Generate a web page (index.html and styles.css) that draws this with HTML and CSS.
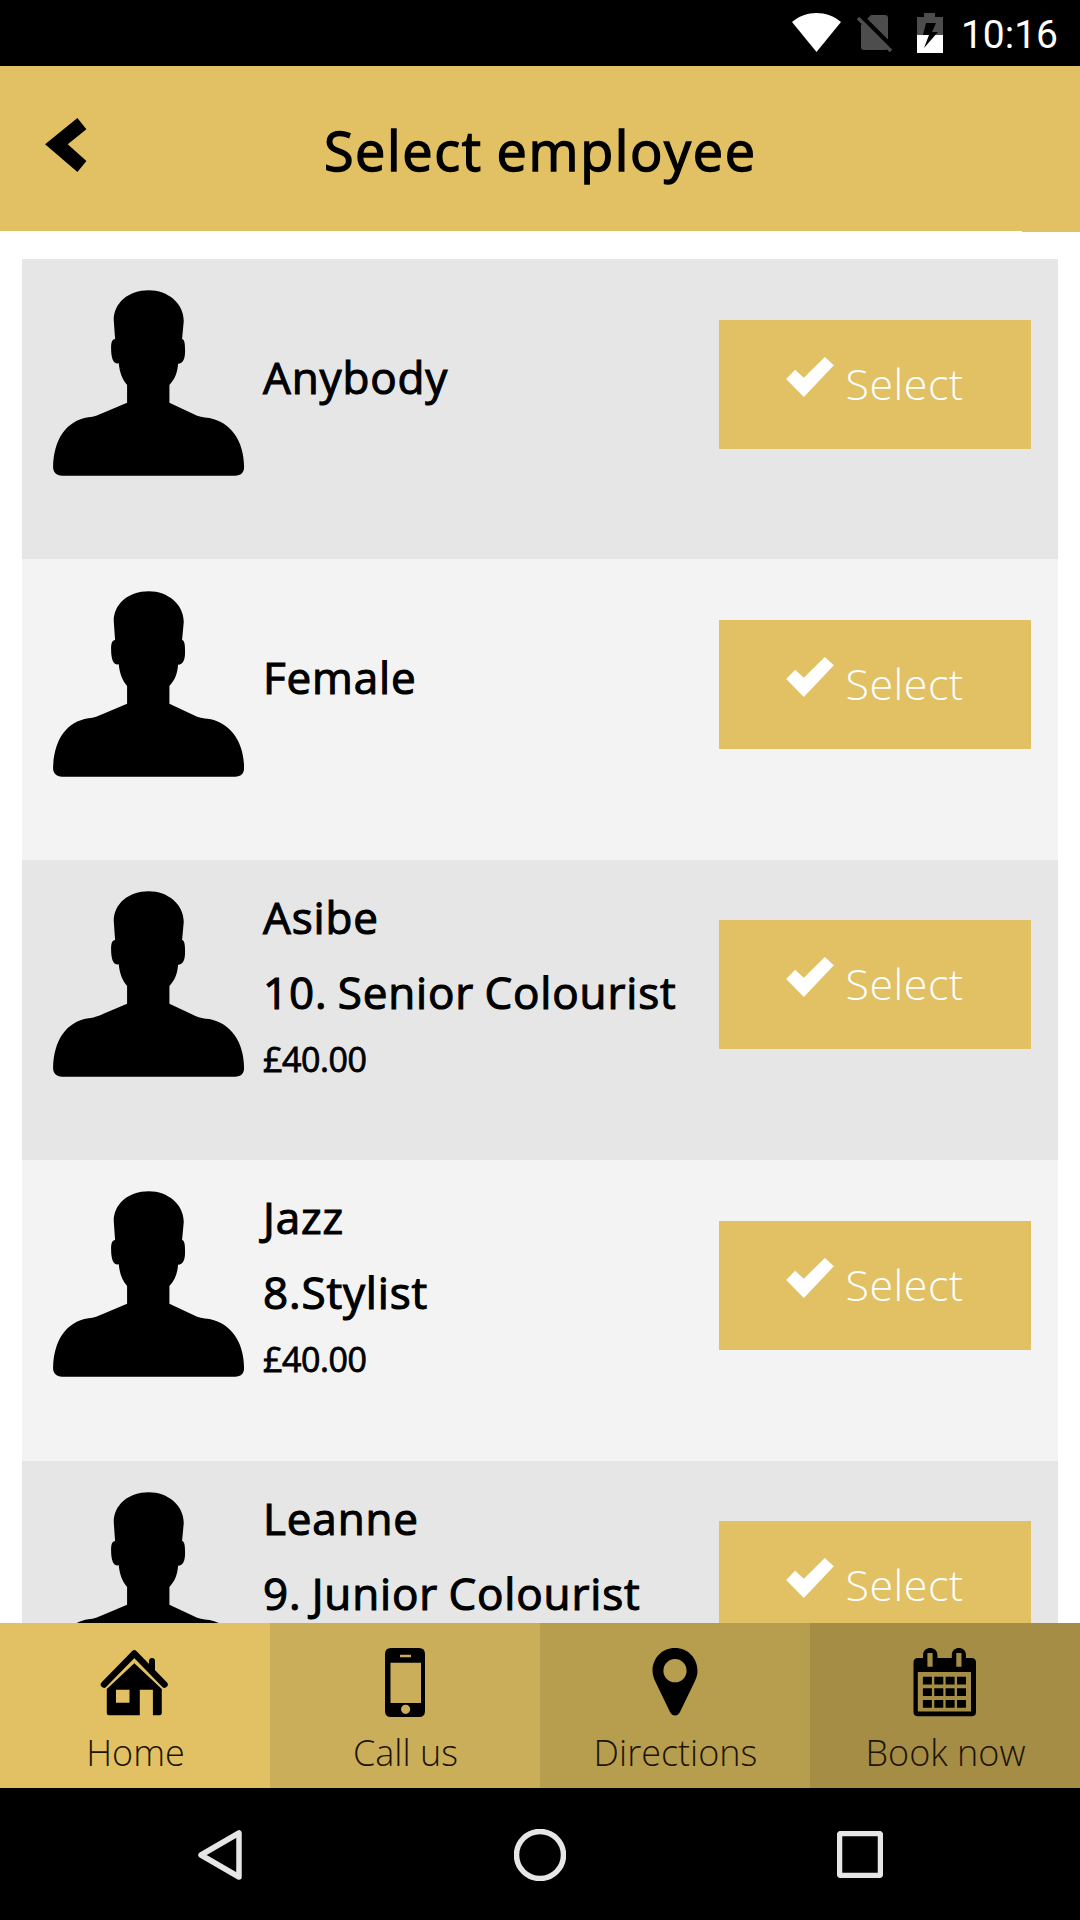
FILE: index.html
```html
<!DOCTYPE html>
<html lang="en">
  <head>
    <meta charset="UTF-8" />
    <meta
      name="viewport"
      content="width=device-width, initial-scale=1.0"
    />
    <title>Select employee</title>
    <link rel="stylesheet" href="styles.css">
  </head>
  <body>
    <!-- shared icons -->
    <svg class="icon-defs">
      <symbol id="person" viewBox="99 121 574 558">
        <path d="M281 212C281 160 325 122 386 122C444 122 491 162 491 214L486 268C493 269 495 281 495 303C495 328 489 341 474 342C472 370 464 388 448 406V459L520 493C535 501 548 504 568 505C630 517 672 572 672 652C672 669 662 678 645 678H126C109 678 99 668 99 652C101 570 137 514 205 503C222 501 235 496 250 489L321 459V406C306 389 299 370 296 341C280 344 273 327 273 295C273 278 276 269 285 268Z" />
      </symbol>
      <symbol id="check" viewBox="260 170 143 120">
        <path d="M260 236L287 208L313 232L376 170L403 195L313 290Z" />
      </symbol>
    </svg>

    <div class="status-bar">
      <svg class="wifi" viewBox="0 0 49 39">
        <path d="M0 9C14-3 35-3 49 9L24.500 39Z" />
      </svg>
      <svg class="sim" viewBox="0 0 36 38">
        <path d="M14 0H28Q31 0 31 3V32Q31 35 28 35H7Q4 35 4 32V10Z" fill="#4d4d4d" />
        <path d="M3 0L36 33" stroke="#000" stroke-width="5" />
        <path d="M1 3L34 36" stroke="#4d4d4d" stroke-width="3.500" />
      </svg>
      <svg class="battery" viewBox="0 0 26 40">
        <path d="M7 0H18V4H26V22H0V4H7Z" fill="#4d4d4d" />
        <path d="M0 22H26V40H0Z" fill="#fff" />
        <path d="M9 10H19L15 19H21L7 35L12 22H6Z" fill="#000" />
      </svg>
      <span class="clock">10:16</span>
    </div>

    <header class="header">
      <svg class="back" viewBox="135 174 124 162">
        <path d="M135 253L232 174L259 208L203 253L259 303L232 336Z" />
      </svg>
      <h1>Select employee</h1>
    </header>

    <main class="content">
      <ul class="employee-list">
        <li class="employee">
          <svg class="avatar"><use href="#person" /></svg>
          <div class="info single">
            <p>Anybody</p>
          </div>
          <button class="select"><svg><use href="#check" /></svg>Select</button>
        </li>
        <li class="employee">
          <svg class="avatar"><use href="#person" /></svg>
          <div class="info single">
            <p>Female</p>
          </div>
          <button class="select"><svg><use href="#check" /></svg>Select</button>
        </li>
        <li class="employee">
          <svg class="avatar"><use href="#person" /></svg>
          <div class="info">
            <p>Asibe</p>
            <p>10. Senior Colourist</p>
            <p class="price">£40.00</p>
          </div>
          <button class="select"><svg><use href="#check" /></svg>Select</button>
        </li>
        <li class="employee">
          <svg class="avatar"><use href="#person" /></svg>
          <div class="info">
            <p>Jazz</p>
            <p>8.Stylist</p>
            <p class="price">£40.00</p>
          </div>
          <button class="select"><svg><use href="#check" /></svg>Select</button>
        </li>
        <li class="employee">
          <svg class="avatar"><use href="#person" /></svg>
          <div class="info">
            <p>Leanne</p>
            <p>9. Junior Colourist</p>
          </div>
          <button class="select"><svg><use href="#check" /></svg>Select</button>
        </li>
      </ul>
    </main>

    <nav class="tabs">
      <a class="tab home">
        <svg width="69" height="69" viewBox="0 0 69 69">
          <path d="M4 36.500L34.300 5.500L64.500 36.500" fill="none" stroke="#000" stroke-width="6.500" stroke-linecap="round" stroke-linejoin="round" />
          <path d="M49 24V13Q49 10 52 10T55 13V28Z" />
          <path fill-rule="evenodd" d="M34.300 15.300L61.800 41V65Q61.800 67.300 59.500 67.300H52.900V41.700H39.800V67.300H9Q6.800 67.300 6.800 65V41ZM16 41.700V54.700H29.500V41.700Z" />
        </svg>
        Home
      </a>
      <a class="tab call">
        <svg width="40" height="69" viewBox="0 0 40 69">
          <path fill-rule="evenodd" d="M6 0H34Q40 0 40 6V63Q40 69 34 69H6Q0 69 0 63V6Q0 0 6 0ZM5.500 14.700V55H36V14.700ZM15 6.700V9.300H26V6.700ZM25.200 61.300A4.600 4.600 0 1 0 16 61.300A4.600 4.600 0 1 0 25.200 61.300Z" />
        </svg>
        Call us
      </a>
      <a class="tab directions">
        <svg width="46" height="69" viewBox="0 0 46 69">
          <path fill-rule="evenodd" d="M23 0C36 0 45.500 10 45.500 23C45.500 27 44 31 42 35L28 64Q26 67.500 23 67.500T18 64L4 35C2 31 .5 27 .5 23C.5 10 10 0 23 0ZM34.600 22.700A11.600 11.600 0 1 0 11.400 22.700A11.600 11.600 0 1 0 34.600 22.700Z" />
        </svg>
        Directions
      </a>
      <a class="tab book">
        <svg width="63" height="69" viewBox="0 0 63 69">
          <path fill-rule="evenodd" d="M5 10H10V7C10-2.300 24.400-2.300 24.400 7V10H38.800V7C38.800-2.300 53 -2.300 53 7V10H58.500Q63 10 63 14.500V64Q63 68.300 58.500 68.300H5Q.5 68.300 .5 64V14.500Q.5 10 5 10ZM4.800 24V63.500H58V24ZM14.400 5V18.700H19.600V5ZM43.300 5V18.700H48.500V5Z" />
          <path d="M14.400 28.700V60M25.800 28.700V60M37.100 28.700V60M48.500 28.700V60" stroke="#000" stroke-width="9" stroke-dasharray="7.700 3.950" />
        </svg>
        Book now
      </a>
    </nav>

    <footer class="system-bar">
      <svg width="46" height="52" viewBox="0 0 46 52">
        <path d="M42 4V48L4 26Z" />
      </svg>
      <svg width="52" height="52" viewBox="0 0 52 52">
        <circle cx="26" cy="26" r="23.500" />
      </svg>
      <svg width="46" height="47" viewBox="0 0 46 47">
        <rect x="2.500" y="2.500" width="41" height="42" rx="1.500" />
      </svg>
    </footer>
  </body>
</html>
```

FILE: styles.css
```css
* {
  padding: 0;
  margin: 0;
  box-sizing: border-box;
}

body {
  width: 1080px;
  height: 1920px;
  display: flex;
  flex-direction: column;
  overflow: hidden;
  font-family: "Open Sans", "Noto Sans", sans-serif;
  color: #000;
  background-color: #fff;
}

svg {
  display: block;
  flex: none;
}

.icon-defs {
  position: absolute;
  width: 0;
  height: 0;
}

/* status bar */
.status-bar {
  height: 66px;
  flex: none;
  display: flex;
  justify-content: flex-end;
  padding: 13px 22px 0 0;
  background-color: #000;
}

.wifi {
  width: 49px;
  height: 39px;
  margin-right: 16px;
  fill: #fff;
}

.sim {
  width: 36px;
  height: 38px;
  margin: 2px 24px 0 0;
}

.battery {
  width: 26px;
  height: 40px;
  margin-right: 18px;
}

.clock {
  font-family: Roboto, sans-serif;
  font-size: 39px;
  line-height: 44px;
  color: #fff;
}

/* header */
.header {
  position: relative;
  height: 165px;
  flex: none;
  display: flex;
  align-items: flex-start;
  padding: 52px 45px 0;
  background-color: #e1c163;
}

.header::after {
  content: "";
  position: absolute;
  top: 100%;
  right: 0;
  width: 58px;
  height: 1px;
  background-color: #e1c163;
}

.back {
  width: 41.500px;
  height: 54px;
}

.header h1 {
  flex: 1;
  padding-right: 41px;
  text-align: center;
  font-size: 54px;
  font-weight: 400;
  line-height: 65px;
  letter-spacing: 1.6px;
  word-spacing: -1.5px;
  -webkit-text-stroke: 1.4px #000;
}

/* employees */
.content {
  height: 1392px;
  flex: none;
  padding: 28px 22px 0;
  overflow: hidden;
}

.employee-list {
  list-style: none;
}

.employee {
  height: 300.4px;
  display: flex;
  align-items: flex-start;
  padding: 0 27px 0 31px;
  background-color: #e6e6e6;
}

.employee:nth-child(even) {
  background-color: #f3f3f3;
}

.avatar {
  width: 191.5px;
  height: 186px;
  margin: 31.3px 18.5px 0 0;
}

.info {
  flex: 1;
  padding-top: 20px;
  font-size: 44px;
  line-height: 75px;
  letter-spacing: 0.85px;
  word-spacing: -2px;
  white-space: nowrap;
  -webkit-text-stroke: 1.1px #000;
}

.info.single {
  padding-top: 81px;
}

.info .price {
  font-size: 34px;
  line-height: 58px;
  letter-spacing: -0.45px;
  -webkit-text-stroke: 0.8px #000;
}

.select {
  width: 312px;
  height: 129px;
  margin-top: 60.6px;
  display: flex;
  align-items: flex-start;
  padding: 37px 0 0 67px;
  border: none;
  font-family: inherit;
  font-size: 43px;
  font-weight: 300;
  line-height: 54px;
  letter-spacing: 0.5px;
  color: #fff;
  background-color: #e1c163;
}

.select svg {
  width: 48px;
  height: 40px;
  margin-right: 11.5px;
  fill: #fff;
}

/* bottom navigation */
.tabs {
  height: 165px;
  flex: none;
  display: flex;
}

.tab {
  width: 270px;
  display: flex;
  flex-direction: column;
  align-items: center;
  padding: 25px 0 0 1px;
  font-size: 36px;
  font-weight: 300;
  line-height: 50px;
  color: #1c1403;
}

.tab svg {
  margin: 0 2px 11px 0;
}

.home {
  background-color: #e1c163;
}

.call {
  background-color: #cbae59;
}

.directions {
  background-color: #b79e4e;
}

.book {
  background-color: #a58d46;
}

.system-bar {
  flex: 1;
  display: flex;
  justify-content: center;
  align-items: center;
  gap: 271px;
  padding: 1px 1px 0 0;
  background-color: #000;
}

.system-bar svg {
  fill: none;
  stroke: #e6e6e6;
  stroke-width: 5.5px;
  stroke-linejoin: round;
}
```
